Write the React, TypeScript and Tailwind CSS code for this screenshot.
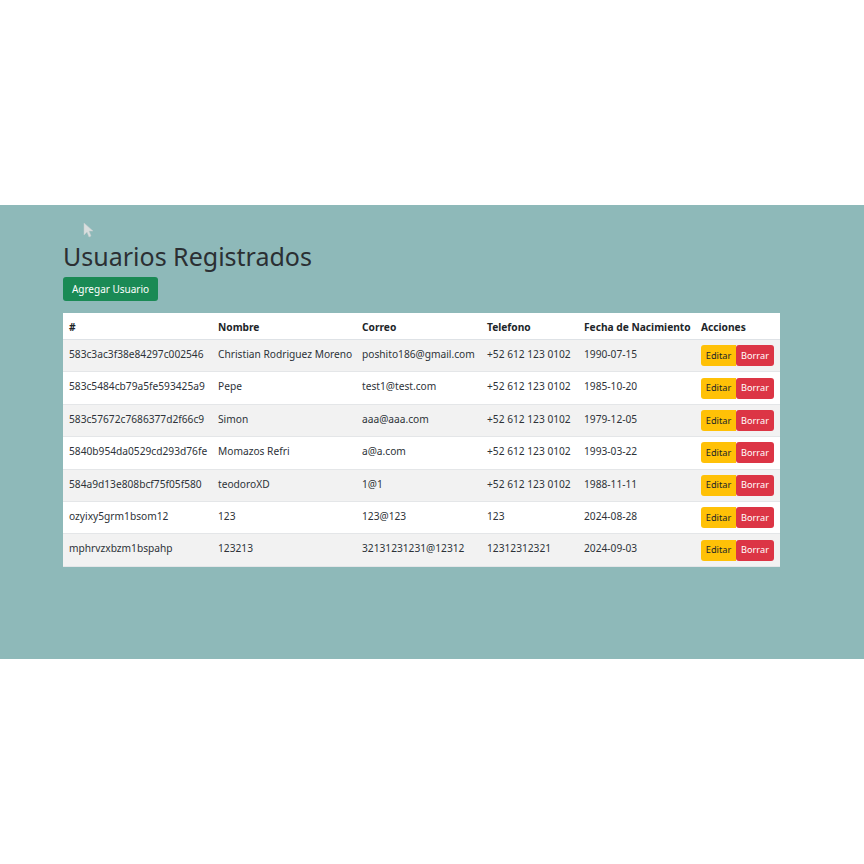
import React from "react";

const rows = [
  ["583c3ac3f38e84297c002546", "Christian Rodriguez Moreno", "poshito186@gmail.com", "+52 612 123 0102", "1990-07-15"],
  ["583c5484cb79a5fe593425a9", "Pepe", "test1@test.com", "+52 612 123 0102", "1985-10-20"],
  ["583c57672c7686377d2f66c9", "Simon", "aaa@aaa.com", "+52 612 123 0102", "1979-12-05"],
  ["5840b954da0529cd293d76fe", "Momazos Refri", "a@a.com", "+52 612 123 0102", "1993-03-22"],
  ["584a9d13e808bcf75f05f580", "teodoroXD", "1@1", "+52 612 123 0102", "1988-11-11"],
  ["ozyixy5grm1bsom12", "123", "123@123", "123", "2024-08-28"],
  ["mphrvzxbzm1bspahp", "123213", "32131231231@12312", "12312312321", "2024-09-03"],
];

const grid = "grid grid-cols-[149px_144px_125px_97px_117px_85px]";

export default function App() {
  return (
    <div className="w-[864px] h-[864px] bg-white" style={{ fontFamily: '"Noto Sans", "Open Sans", sans-serif' }}>
      <div className="h-[205px]" />
      <div className="relative h-[454px] bg-[#8eb9b9] pl-[63px] pt-[35px]">
        <svg className="absolute left-[83px] top-[17px]" width="12" height="16" viewBox="0 0 12 16">
          <path d="M1 1 L1 13 L4 10 L6 15 L8 14 L6 9 L10 9 Z" fill="#d9dede" stroke="#c4cccc" strokeWidth="0.5" />
        </svg>
        <h1 className="text-[25px] leading-[33px] text-[#2b2f33] font-normal">Usuarios Registrados</h1>
        <button className="mt-[4px] h-[24px] w-[95px] rounded-[3px] bg-[#1a8a55] text-white text-[10px] leading-none">
          Agregar Usuario
        </button>
        <div className="mt-[12px] w-[717px] bg-white text-[10.2px] text-[#212529]">
          <div className={`${grid} h-[27px] items-center font-bold border-b border-[#dee2e6]`}>
            <div className="pl-[6px] pt-[3px]">#</div>
            <div className="pl-[6px] pt-[3px]">Nombre</div>
            <div className="pl-[6px] pt-[3px]">Correo</div>
            <div className="pl-[6px] pt-[3px]">Telefono</div>
            <div className="pl-[6px] pt-[3px] whitespace-nowrap">Fecha de Nacimiento</div>
            <div className="pl-[6px] pt-[3px]">Acciones</div>
          </div>
          {rows.map((r, i) => (
            <div
              key={i}
              className={`${grid} h-[32.4px] items-center border-b border-[#e4e6e8] ${i % 2 === 0 ? "bg-[#f2f2f2]" : "bg-white"}`}
            >
              {r.map((c, j) => (
                <div key={j} className="pl-[6px] pb-[2px] whitespace-nowrap text-[#2d3238]">{c}</div>
              ))}
              <div className="pl-[6px] flex">
                <button className="h-[21px] w-[35px] bg-[#ffc107] text-[9.2px] text-[#212529] rounded-l-[3px]">Editar</button>
                <button className="h-[21px] w-[38px] bg-[#dc3545] text-[9.2px] text-white rounded-[3px]">Borrar</button>
              </div>
            </div>
          ))}
        </div>
      </div>
    </div>
  );
}
